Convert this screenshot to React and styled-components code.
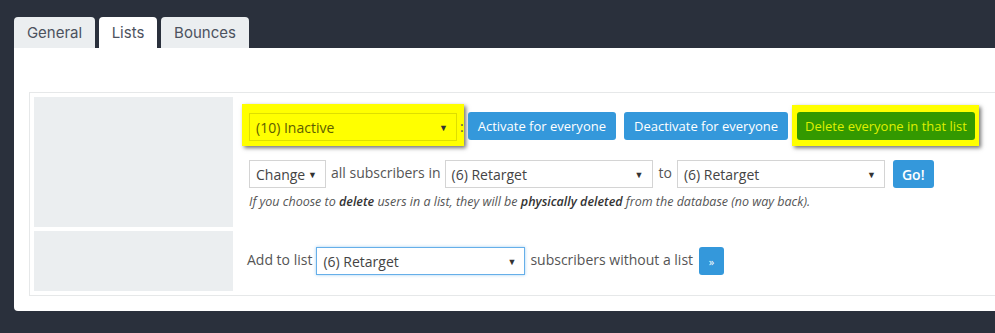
import React from "react";
import styled, { createGlobalStyle } from "styled-components";

const GlobalStyle = createGlobalStyle`
  html, body {
    margin: 0;
    padding: 0;
    background: #2a303c;
    overflow: hidden;
  }
  body {
    font-family: "Open Sans", "Liberation Sans", sans-serif;
    color: #555;
  }
`;

const Page = styled.div`
  padding: 17px 0 0 14px;
  width: 1040px;
  height: 333px;
  box-sizing: border-box;
`;

const TabBar = styled.div`
  display: flex;
  gap: 4px;
`;

const Tab = styled.div`
  height: 31px;
  padding: 0 12px;
  display: flex;
  align-items: center;
  justify-content: center;
  background: ${(p) => (p.active ? "#ffffff" : "#ebeef0")};
  border-radius: 4px 4px 0 0;
  font-family: Inter, "Noto Sans", sans-serif;
  font-size: 15px;
  color: #4c525e;
  min-width: ${(p) => p.w}px;
  box-sizing: border-box;
`;

const Panel = styled.div`
  background: #fff;
  border-radius: 0 0 0 4px;
  padding: 44px 0 15px 15px;
`;

const Table = styled.div`
  border: 1px solid #e6e8e9;
  padding: 4px;
  display: flex;
  flex-direction: column;
  gap: 4px;
`;

const Row = styled.div`
  display: flex;
  height: ${(p) => p.h}px;
`;

const Thumb = styled.div`
  width: 199px;
  flex: none;
  background: #ebeef0;
`;

const Cell = styled.div`
  flex: 1;
  padding: ${(p) => p.pad};
  display: flex;
  flex-direction: column;
  justify-content: ${(p) => (p.center ? "center" : "flex-start")};
`;

const Line = styled.div`
  display: flex;
  align-items: ${(p) => p.align || "center"};
  gap: ${(p) => p.gap || 0}px;
  margin-top: ${(p) => p.mt || 0}px;
  margin-left: ${(p) => p.ml || 0}px;
  font-size: 14px;
  color: #555;
`;

const Highlight = styled.div`
  background: #ffff00;
  padding: ${(p) => p.pad};
  margin: ${(p) => p.m || 0};
  box-shadow: 2px 2px 4px rgba(0, 0, 0, 0.55);
  display: flex;
`;

const SelectBox = styled.div`
  width: ${(p) => p.w}px;
  height: 28px;
  box-sizing: border-box;
  border: 1px solid ${(p) => (p.focus ? "#66afe9" : p.marked ? "#dede00" : "#d4d4d4")};
  box-shadow: ${(p) => (p.focus ? "0 0 3px rgba(102,175,233,0.6)" : "none")};
  background: ${(p) => (p.marked ? "#ffff00" : "#fff")};
  color: ${(p) => (p.marked ? "#5d5d00" : "#444")};
  display: flex;
  align-items: center;
  justify-content: space-between;
  padding: 0 8px 0 6px;
  font-size: 14px;
  flex: none;
`;

const Arrow = styled.span`
  font-size: 9px;
  color: #333;
`;

const Button = styled.div`
  height: 28px;
  box-sizing: border-box;
  padding: 0 ${(p) => p.px ?? 10}px;
  min-width: ${(p) => p.w || 0}px;
  display: flex;
  align-items: center;
  justify-content: center;
  border-radius: 3px;
  background: ${(p) => (p.green ? "#339900" : "#3498db")};
  color: ${(p) => (p.green ? "#dff000" : "#fff")};
  font-size: ${(p) => p.fs || 13}px;
  font-weight: ${(p) => p.fw || 400};
  margin-left: ${(p) => p.ml || 0}px;
  white-space: nowrap;
  flex: none;
`;

const Label = styled.span`
  margin: 0 ${(p) => p.mr ?? 4}px 0 ${(p) => p.ml ?? 5}px;
  white-space: nowrap;
  font-size: 14px;
  color: #555;
  position: relative;
  top: ${(p) => p.top ?? -2}px;
`;

const Note = styled.div`
  font-size: 12.5px;
  font-style: italic;
  color: #555;
  margin: 5px 0 0 7px;
  b {
    color: #333;
    font-weight: 600;
  }
`;

const Select = ({ w, children, focus, marked }) => (
  <SelectBox w={w} focus={focus} marked={marked}>
    <span>{children}</span>
    <Arrow>▼</Arrow>
  </SelectBox>
);

export default function App() {
  return (
    <Page>
      <GlobalStyle />
      <TabBar>
        <Tab w={81}>General</Tab>
        <Tab active w={58}>Lists</Tab>
        <Tab w={88}>Bounces</Tab>
      </TabBar>
      <Panel>
        <Table>
          <Row h={130}>
            <Thumb />
            <Cell pad="7px 0 0 9px">
              <Line align="flex-start">
                <Highlight pad="9px 7px 5px 7px">
                  <Select w={208} marked>
                    (10) Inactive
                  </Select>
                </Highlight>
                <Label ml={-4} mr={4} top={13}>:</Label>
                <Line mt={8} gap={8}>
                  <Button>Activate for everyone</Button>
                  <Button>Deactivate for everyone</Button>
                </Line>
                <Highlight pad="7px 4px 6px 5px" m="1px 0 0 4px">
                  <Button green px={8}>Delete everyone in that list</Button>
                </Highlight>
              </Line>
              <Line mt={14} ml={7}>
                <Select w={77}>Change</Select>
                <Label>all subscribers in</Label>
                <Select w={208}>(6) Retarget</Select>
                <Label ml={6} mr={5}>to</Label>
                <Select w={208}>(6) Retarget</Select>
                <Button px={9} fs={14} fw={600} ml={8}>
                  Go!
                </Button>
              </Line>
              <Note>
                If you choose to <b>delete</b> users in a list, they will be{" "}
                <b>physically deleted</b> from the database (no way back).
              </Note>
            </Cell>
          </Row>
          <Row h={60}>
            <Thumb />
            <Cell pad="0 0 0 14px" center>
              <Line>
                <Label ml={0} mr={4}>Add to list</Label>
                <Select w={209} focus>
                  (6) Retarget
                </Select>
                <Label ml={5} mr={6}>subscribers without a list</Label>
                <Button px={0} w={25} fs={11}>
                  »
                </Button>
              </Line>
            </Cell>
          </Row>
        </Table>
      </Panel>
    </Page>
  );
}
